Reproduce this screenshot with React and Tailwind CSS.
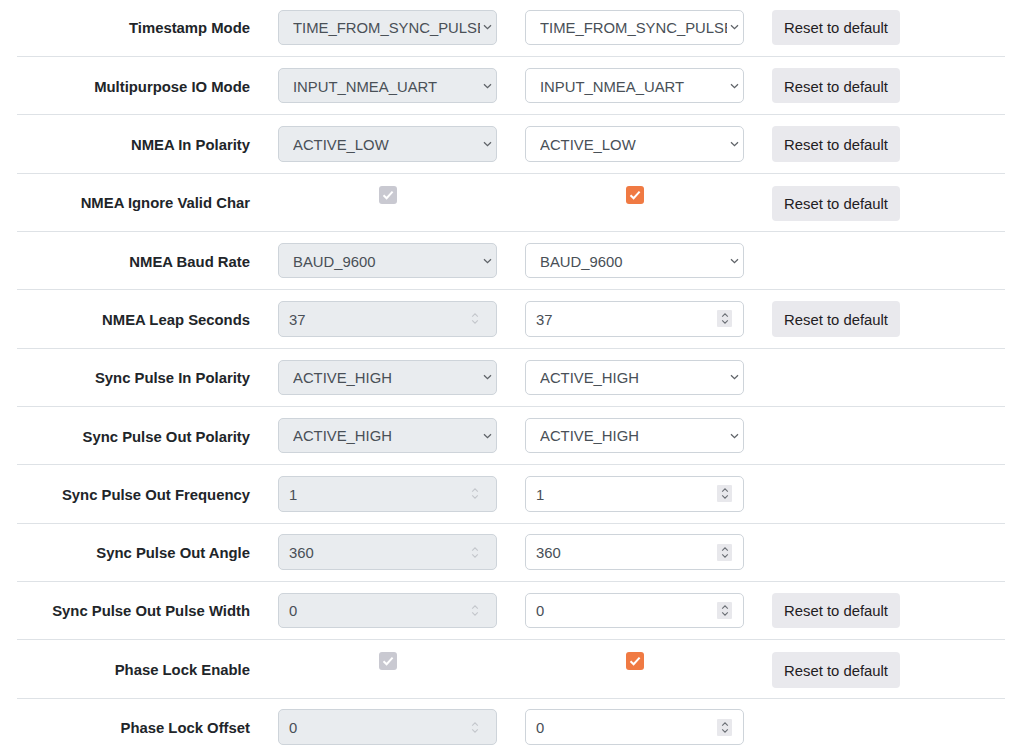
import React from 'react';

const ROWS = [
  { label: 'Timestamp Mode', type: 'select', value: 'TIME_FROM_SYNC_PULSE_ZERO', reset: true },
  { label: 'Multipurpose IO Mode', type: 'select', value: 'INPUT_NMEA_UART', reset: true },
  { label: 'NMEA In Polarity', type: 'select', value: 'ACTIVE_LOW', reset: true },
  { label: 'NMEA Ignore Valid Char', type: 'check', reset: true },
  { label: 'NMEA Baud Rate', type: 'select', value: 'BAUD_9600', reset: false },
  { label: 'NMEA Leap Seconds', type: 'number', value: '37', reset: true },
  { label: 'Sync Pulse In Polarity', type: 'select', value: 'ACTIVE_HIGH', reset: false },
  { label: 'Sync Pulse Out Polarity', type: 'select', value: 'ACTIVE_HIGH', reset: false },
  { label: 'Sync Pulse Out Frequency', type: 'number', value: '1', reset: false },
  { label: 'Sync Pulse Out Angle', type: 'number', value: '360', reset: false },
  { label: 'Sync Pulse Out Pulse Width', type: 'number', value: '0', reset: true },
  { label: 'Phase Lock Enable', type: 'check', reset: true },
  { label: 'Phase Lock Offset', type: 'number', value: '0', reset: false },
];

function Chevron() {
  return (
    <svg width="9" height="6" viewBox="0 0 9 6" className="shrink-0">
      <path d="M1 1.2 L4.5 4.6 L8 1.2" fill="none" stroke="#5f6368" strokeWidth="1.3" />
    </svg>
  );
}

function Spinner({ disabled }) {
  const c = disabled ? '#c4c7cc' : '#6b6f75';
  return (
    <div className={`w-[15px] h-[17px] flex items-center justify-center rounded-[1px] ${disabled ? '' : 'bg-[#e8e8ec]'}`}>
      <svg width="8" height="13" viewBox="0 0 8 13">
        <path d="M1.2 4.6 L4 1.8 L6.8 4.6" fill="none" stroke={c} strokeWidth="1.1" />
        <path d="M1.2 8.4 L4 11.2 L6.8 8.4" fill="none" stroke={c} strokeWidth="1.1" />
      </svg>
    </div>
  );
}

function SelectBox({ value, disabled }) {
  return (
    <div
      className={`w-[219px] h-[35.6px] flex items-center rounded-[5px] border border-[#ced4da] pl-[14px] pr-[4px] ${
        disabled ? 'bg-[#e9ecef]' : 'bg-white'
      }`}
    >
      <span className="flex-1 min-w-0 overflow-hidden whitespace-nowrap text-[#495057] pt-[2px] mr-[3px]">{value}</span>
      <Chevron />
    </div>
  );
}

function NumberBox({ value, disabled }) {
  return (
    <div
      className={`w-[219px] h-[35.6px] flex items-center justify-between rounded-[5px] border border-[#ced4da] pl-[10px] ${
        disabled ? 'bg-[#e9ecef] pr-[14px]' : 'bg-white pr-[11px]'
      }`}
    >
      <span className="text-[#495057] pt-[2px]">{value}</span>
      <Spinner disabled={disabled} />
    </div>
  );
}

function CheckBox({ disabled }) {
  return (
    <div className="w-[219px] self-start mt-[12px] flex justify-center">
      <div
        className={`w-[18px] h-[18px] rounded-[3px] flex items-center justify-center ${
          disabled ? 'bg-[#c9c9d1]' : 'bg-[#f07a43]'
        }`}
      >
        <svg width="12" height="10" viewBox="0 0 12 10">
          <path d="M1.5 5.2 L4.6 8.2 L10.6 1.6" fill="none" stroke="white" strokeWidth="2" />
        </svg>
      </div>
    </div>
  );
}

function Control({ row, disabled }) {
  if (row.type === 'select') return <SelectBox value={row.value} disabled={disabled} />;
  if (row.type === 'number') return <NumberBox value={row.value} disabled={disabled} />;
  return <CheckBox disabled={disabled} />;
}

export default function App() {
  return (
    <div
      className="w-full min-h-screen bg-white px-[17px] overflow-hidden text-[14.85px]"
      style={{ fontFamily: '"Liberation Sans", Arial, sans-serif' }}
    >
      <div className="-mt-[1.33px]">
        {ROWS.map((row) => (
          <div key={row.label} className="h-[58.33px] flex items-center border-b border-[#dee2e6]">
            <div className="w-[233px] text-right font-bold text-[#212529] whitespace-nowrap pt-[2px]">{row.label}</div>
            <div className="ml-[28px] flex self-stretch items-center">
              <Control row={row} disabled />
            </div>
            <div className="ml-[28px] flex self-stretch items-center">
              <Control row={row} disabled={false} />
            </div>
            {row.reset && (
              <div className="ml-[28px] flex self-stretch items-center">
                <button
                  className={`w-[128px] h-[35.6px] rounded-[4px] bg-[#e9e9ed] text-[#1f2023] pt-[2px] ${
                    row.type === 'check' ? 'self-start mt-[12px]' : ''
                  }`}
                >
                  Reset to default
                </button>
              </div>
            )}
          </div>
        ))}
      </div>
    </div>
  );
}
